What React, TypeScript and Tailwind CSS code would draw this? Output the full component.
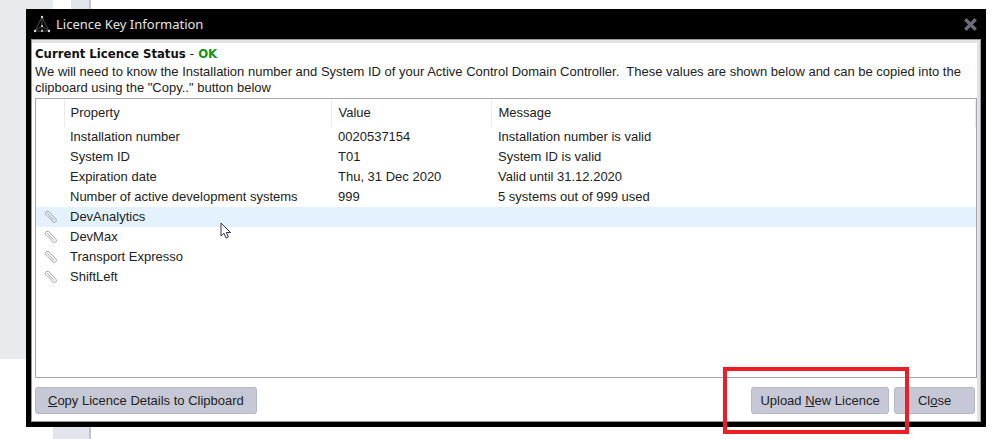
import { clsx } from 'clsx';

interface LicenceRow {
  property: string;
  value?: string;
  message?: string;
  attachment?: boolean;
  selected?: boolean;
}

const rows: LicenceRow[] = [
  { property: 'Installation number', value: '0020537154', message: 'Installation number is valid' },
  { property: 'System ID', value: 'T01', message: 'System ID is valid' },
  { property: 'Expiration date', value: 'Thu, 31 Dec 2020', message: 'Valid until 31.12.2020' },
  { property: 'Number of active development systems', value: '999', message: '5 systems out of 999 used' },
  { property: 'DevAnalytics', attachment: true, selected: true },
  { property: 'DevMax', attachment: true },
  { property: 'Transport Expresso', attachment: true },
  { property: 'ShiftLeft', attachment: true },
];

const buttonClass =
  'h-[27px] rounded-[3px] border border-[#b4b8c6] bg-[#c6c8d5] text-[13px] leading-4 whitespace-nowrap text-[#222]';

function AppLogo() {
  return (
    <svg width="18" height="18" viewBox="0 0 18 18" fill="none" aria-hidden="true">
      <path d="M9 2 2 16M9 2l7 14M9 2v14M2 16h14M2 16l7-5 7 5" stroke="#555" strokeWidth="0.9" />
      <g fill="#ddd">
        <circle cx="9" cy="2" r="1.2" />
        <circle cx="9" cy="11" r="1" />
        <circle cx="2" cy="16" r="1.2" />
        <circle cx="9" cy="16" r="1" />
        <circle cx="16" cy="16" r="1.2" />
      </g>
    </svg>
  );
}

function PaperclipIcon() {
  return (
    <svg width="14" height="14" viewBox="0 0 14 14" fill="none" aria-hidden="true">
      <path
        d="M4 6.500 9 11.900c1.800 1.700 4.600-.8 2.900-2.800L5.200 2C3.200.2.2 2.300 1.500 4.300L3 6M3.400 3.400 9.800 10.200"
        stroke="#999"
        strokeWidth="0.9"
        strokeLinecap="round"
      />
    </svg>
  );
}

function Cursor() {
  return (
    <svg className="absolute top-[15px] left-[156px] z-10" width="12" height="18" viewBox="0 0 12 18" aria-hidden="true">
      <path d="M1 1v13l3-2.700 2 4.700 2.300-1-2-4.500h4.200z" fill="#fff" stroke="#334" strokeWidth="1" />
    </svg>
  );
}

function Backdrop() {
  return (
    <div className="col-start-1 row-start-1 flex min-h-0" aria-hidden="true">
      <div className="flex w-[53px] flex-col">
        <div className="h-[359px] bg-[#e8eaed]" />
      </div>
      <div className="flex w-[38px] flex-col border-r-2 border-[#c3c3c9]">
        <div className="flex flex-1 justify-end">
          <div className="w-[18px] bg-[#e4e5ec]" />
        </div>
        <div className="h-5 bg-[#e4e5ec]" />
      </div>
    </div>
  );
}

function LicenceTable() {
  return (
    <table className="w-full table-fixed border-collapse text-left text-[13px] leading-4">
      <colgroup>
        <col className="w-[28px]" />
        <col className="w-[267px]" />
        <col className="w-[160px]" />
        <col />
      </colgroup>
      <thead>
        <tr className="h-7">
          <td className="border-r border-[#ebebeb]" />
          <th scope="col" className="border-r border-[#ebebeb] p-0 pl-1.5 font-normal">
            Property
          </th>
          <th scope="col" className="border-r border-[#ebebeb] p-0 pl-[7px] font-normal">
            Value
          </th>
          <th scope="col" className="border-r border-[#ebebeb] p-0 pl-[7px] font-normal">
            Message
          </th>
        </tr>
      </thead>
      <tbody>
        {rows.map((row) => (
          <tr key={row.property} className={clsx('h-5', row.selected && 'bg-[#e3f2fe]')}>
            <td className="p-0 pl-2">{row.attachment && <PaperclipIcon />}</td>
            <td className="relative p-0 pl-1.5 whitespace-nowrap">
              {row.property}
              {row.selected && <Cursor />}
            </td>
            <td className="p-0 pl-[7px]">{row.value}</td>
            <td className="p-0 pl-[7px]">{row.message}</td>
          </tr>
        ))}
      </tbody>
    </table>
  );
}

export default function App() {
  return (
    <div className="grid min-h-screen grid-cols-1 overflow-hidden bg-white font-['Liberation_Sans',Arial,sans-serif] text-[#222]">
      <Backdrop />

      <div
        role="dialog"
        aria-labelledby="dialog-title"
        className="z-10 col-start-1 row-start-1 mt-[9px] mr-3.5 mb-3 ml-[26px] flex flex-col bg-black px-[5px] pb-[5px]"
      >
        <header className="flex h-[30px] items-center gap-[5px] pr-[3px] pl-0.5">
          <AppLogo />
          <h1 id="dialog-title" className="flex-1 font-['Noto_Sans',sans-serif] text-[13px] leading-4 text-[#e4e4e4]">
            Licence Key Information
          </h1>
          <button type="button" aria-label="Close window">
            <svg width="15" height="15" viewBox="0 0 15 15" aria-hidden="true">
              <path d="m3.500 3.500 8 8M11.500 3.500l-8 8" stroke="#6c6d78" strokeWidth="3.400" strokeLinecap="square" />
            </svg>
          </button>
        </header>

        <main className="flex flex-1 flex-col border border-[#9a9a9a] bg-white">
          <div className="flex flex-1 flex-col border-t-3 border-r-3 border-[#e2e2e2] pb-[7px] pl-[3px]">
            <h2 className="pt-[3px] font-['DejaVu_Sans_Condensed','DejaVu_Sans',sans-serif] text-[13px] leading-4 font-bold text-[#111]">
              Current Licence Status <span className="font-normal">-</span> <span className="text-[#16931c]">OK</span>
            </h2>
            <p className="pt-0.5 text-[13px] leading-4 whitespace-pre-wrap">
              {
                'We will need to know the Installation number and System ID of your Active Control Domain Controller.  These values are shown below and can be copied into the clipboard using the "Copy.." button below'
              }
            </p>

            <section className="mt-0.5 flex-1 border border-[#a5a7b0]">
              <LicenceTable />
            </section>

            <footer className="mt-[9px] flex gap-[5px] pr-0.5">
              <button type="button" className={clsx(buttonClass, 'mr-auto px-3')}>
                <u>C</u>opy Licence Details to Clipboard
              </button>
              <div className="relative">
                <button type="button" className={clsx(buttonClass, 'w-[138px]')}>
                  Upload <u>N</u>ew Licence
                </button>
                <div className="pointer-events-none absolute -top-5 -right-5 -bottom-5 -left-7 border-4 border-[#ee1c25]" />
              </div>
              <button type="button" className={clsx(buttonClass, 'w-[81px]')}>
                Cl<u>o</u>se
              </button>
            </footer>
          </div>
        </main>
      </div>
    </div>
  );
}
